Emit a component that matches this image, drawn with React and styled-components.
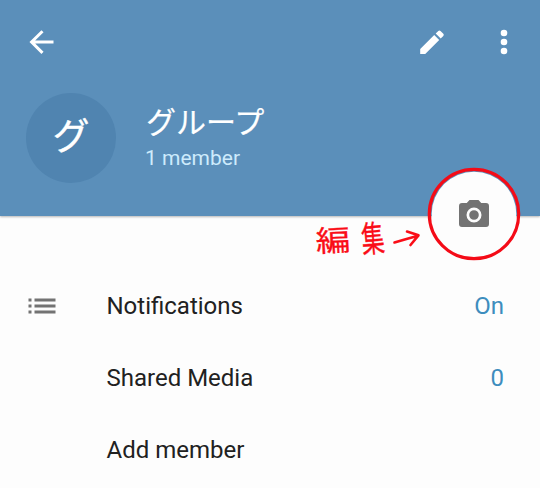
import React from "react";
import styled, { createGlobalStyle } from "styled-components";

const GlobalStyle = createGlobalStyle`
  * { box-sizing: border-box; }
  body { margin: 0; background: #fdfdfd; font-family: Roboto, "Noto Sans CJK JP", sans-serif; }
`;

const Screen = styled.main`
  width: 540px;
  height: 488px;
  overflow: hidden;
  background: #fdfdfd;
`;

const Header = styled.header`
  position: relative;
  height: 216px;
  background: #5b8fba;
  box-shadow: 0 1px 2px rgba(0, 0, 0, 0.28);
`;

const Toolbar = styled.div`
  display: flex;
  align-items: center;
  height: 84px;
  padding: 0 18px 0 24px;
`;

const IconButton = styled.button`
  display: flex;
  width: 36px;
  height: 36px;
  padding: 0;
  border: 0;
  background: none;
  color: #fff;
  margin-left: ${({ $push }) => $push || "0"};
`;

const Profile = styled.div`
  display: flex;
  padding: 9px 0 0 26px;
`;

const Avatar = styled.div`
  display: flex;
  align-items: center;
  justify-content: center;
  width: 90px;
  height: 90px;
  border-radius: 50%;
  background: #5084b0;
  color: #fff;
  font: 400 37px/80px "Noto Sans CJK JP", sans-serif;
  -webkit-text-stroke: 0.4px #fff;
  padding-bottom: 8px;
`;

const Identity = styled.div`
  padding: 8px 0 0 30px;
`;

const GroupName = styled.h1`
  margin: 0;
  color: #fff;
  font: 400 30px/38px "Noto Sans CJK JP", sans-serif;
  -webkit-text-stroke: 0.2px #fff;
`;

const MemberCount = styled.div`
  color: #cdebfc;
  font-size: 21px;
  line-height: 26px;
  margin-top: 6px;
  margin-left: -1px;
`;

const PhotoButton = styled.button`
  position: absolute;
  left: 427px;
  top: 167px;
  width: 94px;
  height: 94px;
  padding: 0;
  border: 0;
  background: none;
`;

const Note = styled.div`
  position: absolute;
  left: 317px;
  top: 218px;
  display: flex;
  align-items: center;
  color: #fa0d17;
`;

const NoteText = styled.span`
  display: flex;
  width: 75px;
  font: 400 32px/40px "Noto Sans CJK JP", sans-serif;
  -webkit-text-stroke: 0.3px currentColor;
`;

const Glyph = styled.span`
  width: 36px;
  flex: none;
  transform: ${({ $tilt }) => $tilt};
`;

const List = styled.ul`
  list-style: none;
  margin: 0;
  padding: 54px 36px 0 24px;
`;

const Row = styled.li`
  display: flex;
  align-items: center;
  height: 72px;
  font-size: 24px;
  color: #212121;
`;

const RowIcon = styled.span`
  display: flex;
  width: 82.5px;
`;

const Value = styled.span`
  margin-left: auto;
  color: #3d8dbe;
`;

const rows = [
  { label: "Notifications", value: "On", icon: true },
  { label: "Shared Media", value: "0" },
  { label: "Add member" },
];

const BackIcon = () => (
  <svg width="36" height="36" fill="none" stroke="currentColor" strokeWidth="3">
    <path d="M29.5 18H8M18.5 7.3 7.6 18l10.9 10.9" />
  </svg>
);

const EditIcon = () => (
  <svg width="36" height="36" fill="currentColor">
    <path d="M6.2 25v5h5L25.2 16l-5-5zM29.3 12a1.6 1.6 0 0 0 0-2.2l-2.8-2.8a1.6 1.6 0 0 0-2.2 0l-2.6 2.6 5 5z" />
  </svg>
);

const MoreIcon = () => (
  <svg width="36" height="36" fill="currentColor">
    <circle cx="18" cy="9" r="3.3" />
    <circle cx="18" cy="18" r="3.3" />
    <circle cx="18" cy="27" r="3.3" />
  </svg>
);

const ListIcon = () => (
  <svg width="36" height="36" fill="#737373">
    <path d="M4.5 10.5h3v3h-3zM10.5 10.5h21v3h-21zM4.5 16.5h3v3h-3zM10.5 16.5h21v3h-21zM4.5 22.5h3v3h-3zM10.5 22.5h21v3h-21z" />
  </svg>
);

const CameraIcon = () => (
  <svg width="94" height="94">
    <circle cx="47" cy="47" r="42.3" fill="#fdfdfd" />
    <circle cx="47" cy="47" r="44.7" fill="none" stroke="#f40b17" strokeWidth="3.2" />
    <g transform="translate(29 30) scale(1.5)">
      <path fill="#737373" d="M9 2 7.17 4H4a2 2 0 0 0-2 2v12a2 2 0 0 0 2 2h16a2 2 0 0 0 2-2V6a2 2 0 0 0-2-2h-3.17L15 2z" />
      <circle cx="12" cy="12" r="4.1" fill="none" stroke="#fdfdfd" strokeWidth="1.8" />
    </g>
  </svg>
);

const PointerArrow = () => (
  <svg width="30" height="24" fill="none" stroke="currentColor" strokeWidth="2.6" strokeLinecap="round" strokeLinejoin="round">
    <path d="M2.5 16.5Q14 13 26 9.7M15 5.5Q20 7 26.5 9.3L18.5 19" />
  </svg>
);

export default function App() {
  return (
    <Screen>
      <GlobalStyle />
      <Header>
        <Toolbar>
          <IconButton aria-label="Back"><BackIcon /></IconButton>
          <IconButton aria-label="Edit" $push="auto"><EditIcon /></IconButton>
          <IconButton aria-label="More options" $push="36px"><MoreIcon /></IconButton>
        </Toolbar>
        <Profile>
          <Avatar>グ</Avatar>
          <Identity>
            <GroupName>グループ</GroupName>
            <MemberCount>1 member</MemberCount>
          </Identity>
        </Profile>
        <Note>
          <NoteText>
            <Glyph $tilt="rotate(-3deg) scale(1.08, 0.92)">編</Glyph>
            <Glyph $tilt="translate(3px, -2px) rotate(-5deg) scale(0.72, 1.12)">集</Glyph>
          </NoteText>
          <PointerArrow />
        </Note>
        <PhotoButton aria-label="Change photo"><CameraIcon /></PhotoButton>
      </Header>
      <List>
        {rows.map(({ label, value, icon }) => (
          <Row key={label}>
            <RowIcon>{icon && <ListIcon />}</RowIcon>
            <span>{label}</span>
            {value && <Value>{value}</Value>}
          </Row>
        ))}
      </List>
    </Screen>
  );
}
